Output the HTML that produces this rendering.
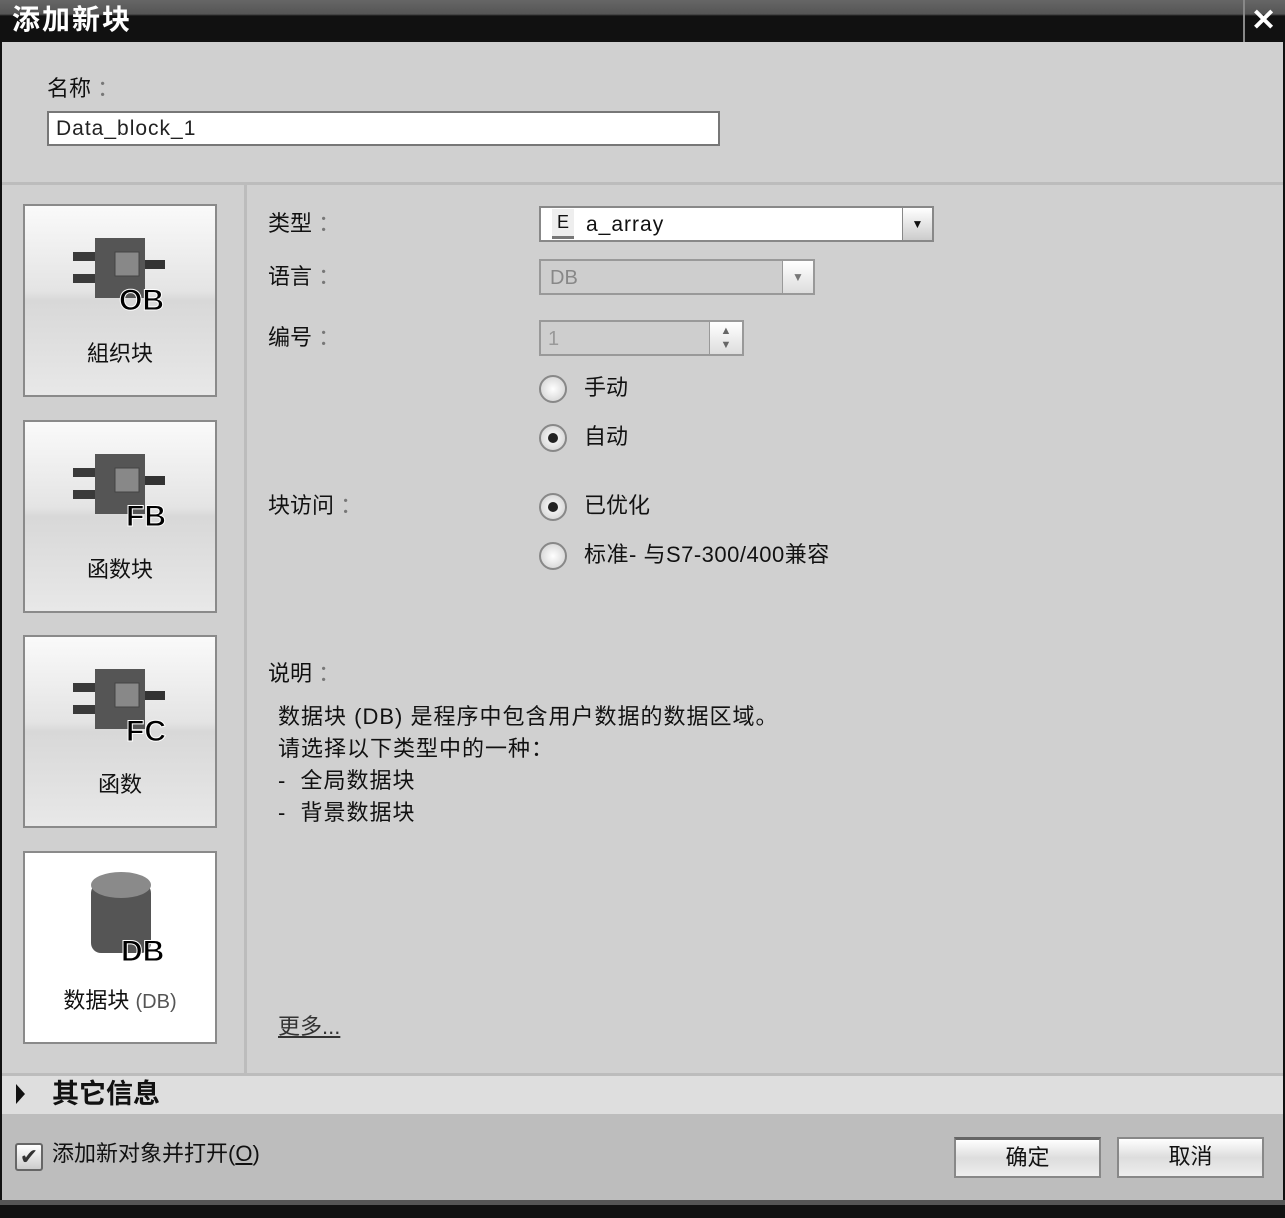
<!DOCTYPE html>
<html><head><meta charset="utf-8"><style>
*{margin:0;padding:0;box-sizing:border-box}
body{width:1285px;height:1218px;background:#111;font-family:"Liberation Sans","Noto Sans CJK SC",sans-serif;color:#111;position:relative;overflow:hidden}
.a{position:absolute}
.t{font-size:22px;line-height:26px;white-space:nowrap}
.btn{position:absolute;left:23px;width:194px;height:193px;border:2px solid #8a8a8a;background:linear-gradient(#fafafa,#e4e4e4 45%,#d8d8d8 50%,#e8e8e8);}
.btn .lbl{position:absolute;left:0;right:0;top:130px;text-align:center;font-size:22px}
.radio{position:absolute;width:28px;height:28px;border-radius:50%;border:2px solid #888;background:radial-gradient(#fff,#ccc)}
.radio.on::after{content:"";position:absolute;left:7px;top:7px;width:10px;height:10px;border-radius:50%;background:#222}
</style></head><body>
<div class="a" style="left:0;top:0;width:1285px;height:42px;background:linear-gradient(#666 0,#555 14px,#111 16px,#111)"></div>
<div class="a t" style="left:12px;top:4px;color:#fff;font-size:28px;font-weight:bold;line-height:32px;letter-spacing:2px">添加新块</div>
<div class="a" style="left:1243px;top:0;width:2px;height:42px;background:#888"></div>
<div class="a" style="left:1251px;top:6px;color:#fff;font-size:30px;font-weight:bold;line-height:30px">✕</div>
<div class="a" style="left:2px;top:42px;width:1281px;height:1158px;background:#d0d0d0"></div>
<div class="a t" style="left:47px;top:76px">名称<span style="color:#777"> ：</span></div>
<div class="a" style="left:47px;top:111px;width:673px;height:35px;background:#fff;border:2px solid #777"></div>
<div class="a t" style="left:56px;top:116px;color:#222;font-size:21px;letter-spacing:1px">Data_block_1</div>
<div class="a" style="left:2px;top:182px;width:1281px;height:3px;background:#bcbcbc"></div>
<div class="a" style="left:244px;top:185px;width:3px;height:888px;background:#bcbcbc"></div>

<div class="btn" style="top:204px"><svg class="a" style="left:46px;top:30px" width="100" height="80"><rect x="2" y="16" width="22" height="9" fill="#3a3a3a"/><rect x="2" y="38" width="22" height="9" fill="#3a3a3a"/><rect x="74" y="24" width="20" height="9" fill="#333"/><rect x="24" y="2" width="50" height="60" fill="#555"/><rect x="44" y="16" width="24" height="24" fill="#888" stroke="#444"/><text x="48" y="74" font-family="Liberation Sans" font-weight="bold" font-size="30" fill="#000" stroke="#fff" stroke-width="1">OB</text></svg><div class="lbl">組织块</div></div>
<div class="btn" style="top:420px"><svg class="a" style="left:46px;top:30px" width="100" height="80"><rect x="2" y="16" width="22" height="9" fill="#3a3a3a"/><rect x="2" y="38" width="22" height="9" fill="#3a3a3a"/><rect x="74" y="24" width="20" height="9" fill="#333"/><rect x="24" y="2" width="50" height="60" fill="#555"/><rect x="44" y="16" width="24" height="24" fill="#888" stroke="#444"/><text x="55" y="74" font-family="Liberation Sans" font-weight="bold" font-size="30" fill="#000" stroke="#fff" stroke-width="1">FB</text></svg><div class="lbl">函数块</div></div>
<div class="btn" style="top:635px"><svg class="a" style="left:46px;top:30px" width="100" height="80"><rect x="2" y="16" width="22" height="9" fill="#3a3a3a"/><rect x="2" y="38" width="22" height="9" fill="#3a3a3a"/><rect x="74" y="24" width="20" height="9" fill="#333"/><rect x="24" y="2" width="50" height="60" fill="#555"/><rect x="44" y="16" width="24" height="24" fill="#888" stroke="#444"/><text x="55" y="74" font-family="Liberation Sans" font-weight="bold" font-size="30" fill="#000" stroke="#fff" stroke-width="1">FC</text></svg><div class="lbl">函数</div></div>
<div class="btn" style="top:851px;background:#fff"><svg class="a" style="left:62px;top:18px" width="90" height="96"><rect x="4" y="12" width="60" height="70" rx="10" fill="#555"/><ellipse cx="34" cy="14" rx="30" ry="13" fill="#8a8a8a"/><text x="34" y="90" font-family="Liberation Sans" font-weight="bold" font-size="30" fill="#000" stroke="#fff" stroke-width="1">DB</text></svg><div class="lbl">数据块 <span style="color:#555;font-size:20px">(DB)</span></div></div>

<div class="a t" style="left:268px;top:211px">类型<span style="color:#777"> ：</span></div>
<div class="a t" style="left:268px;top:264px">语言<span style="color:#777"> ：</span></div>
<div class="a t" style="left:268px;top:325px">编号<span style="color:#777"> ：</span></div>
<div class="a t" style="left:268px;top:493px">块访问<span style="color:#777"> ：</span></div>
<div class="a t" style="left:268px;top:661px">说明<span style="color:#777"> ：</span></div>

<div class="a" style="left:539px;top:206px;width:395px;height:36px;background:#fff;border:2px solid #888"></div>
<div class="a" style="left:552px;top:209px;width:22px;height:30px;background:#eee;border-bottom:3px solid #777;font-size:18px;line-height:26px;text-align:center">E</div>
<div class="a t" style="left:586px;top:212px;font-size:21px;letter-spacing:1px">a_array</div>
<div class="a" style="left:902px;top:208px;width:30px;height:32px;background:linear-gradient(#fff,#ccc);border-left:1px solid #888;font-size:12px;text-align:center;line-height:32px">▼</div>

<div class="a" style="left:539px;top:259px;width:276px;height:36px;border:2px solid #999;background:#cecece"></div>
<div class="a t" style="left:550px;top:265px;color:#888;font-size:20px">DB</div>
<div class="a" style="left:782px;top:261px;width:31px;height:32px;background:linear-gradient(#fff,#ddd);border-left:1px solid #999;color:#777;font-size:12px;text-align:center;line-height:32px">▼</div>

<div class="a" style="left:539px;top:320px;width:205px;height:36px;border:2px solid #999;background:#cecece"></div>
<div class="a t" style="left:548px;top:326px;color:#999;font-size:20px">1</div>
<div class="a" style="left:709px;top:322px;width:33px;height:32px;background:linear-gradient(#fff,#ddd);border-left:1px solid #999;color:#666;font-size:11px;text-align:center;line-height:14px;padding-top:2px">▲<br>▼</div>

<div class="radio" style="left:539px;top:375px"></div><div class="a t" style="left:584px;top:375px">手动</div>
<div class="radio on" style="left:539px;top:424px"></div><div class="a t" style="left:584px;top:424px">自动</div>
<div class="radio on" style="left:539px;top:493px"></div><div class="a t" style="left:584px;top:493px">已优化</div>
<div class="radio" style="left:539px;top:542px"></div><div class="a t" style="left:584px;top:542px;letter-spacing:0.5px">标准- 与S7-300/400兼容</div>

<div class="a t" style="left:278px;top:701px;line-height:32px;letter-spacing:1px">数据块 (DB) 是程序中包含用户数据的数据区域。<br>请选择以下类型中的一种：<br>-&nbsp; 全局数据块<br>-&nbsp; 背景数据块</div>
<div class="a t" style="left:278px;top:1014px;color:#333;text-decoration:underline">更多...</div>

<div class="a" style="left:2px;top:1073px;width:1281px;height:3px;background:#bcbcbc"></div>
<div class="a" style="left:2px;top:1076px;width:1281px;height:38px;background:#dedede"></div>
<div class="a" style="left:16px;top:1084px;width:0;height:0;border-left:9px solid #111;border-top:10px solid transparent;border-bottom:10px solid transparent"></div>
<div class="a t" style="left:52px;top:1079px;font-size:27px;font-weight:bold;line-height:30px">其它信息</div>
<div class="a" style="left:2px;top:1114px;width:1281px;height:86px;background:#bdbdbd"></div>
<div class="a" style="left:15px;top:1143px;width:28px;height:28px;border:2px solid #666;border-radius:3px;background:linear-gradient(#fff,#ccc);font-size:22px;line-height:24px;text-align:center;color:#333">✔</div>
<div class="a t" style="left:52px;top:1141px">添加新对象并打开(<u>O</u>)</div>
<div class="a" style="left:954px;top:1137px;width:147px;height:41px;border:2px solid #888;border-top:3px solid #666;background:linear-gradient(#fff,#ddd 50%,#eee);text-align:center;line-height:36px;font-size:22px">确定</div>
<div class="a" style="left:1117px;top:1137px;width:147px;height:41px;border:2px solid #888;background:linear-gradient(#fff,#ddd 50%,#eee);text-align:center;line-height:36px;font-size:22px">取消</div>
<div class="a" style="left:0;top:1200px;width:1285px;height:5px;background:#555"></div>
</body></html>
